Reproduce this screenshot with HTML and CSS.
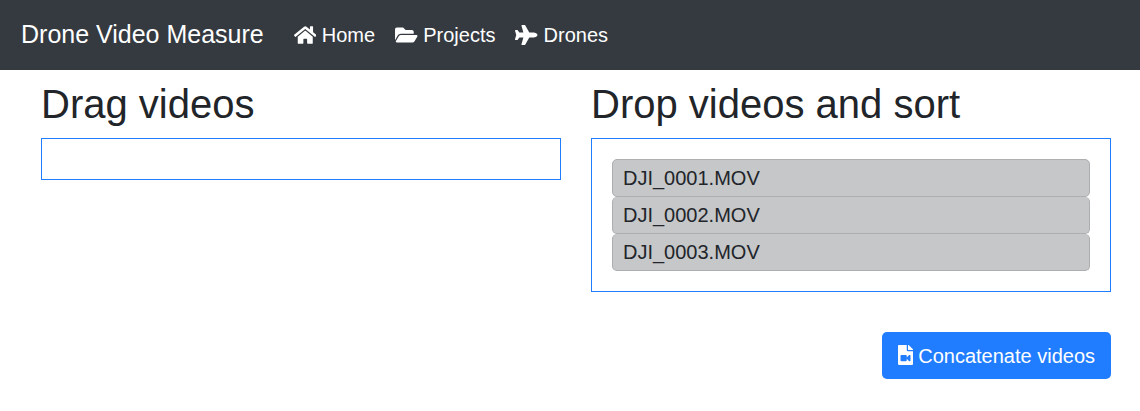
FILE: index.html
```html
<!DOCTYPE html>
<html lang="en">
<head>
<meta charset="utf-8">
<title>Drone Video Measure</title>
<link rel="stylesheet" href="styles.css">
</head>
<body>
<nav class="navbar">
  <a class="brand">Drone Video Measure</a>
  <a class="nav-link"><svg class="icon home" viewBox="0 0 576 512"><path d="M280.37 148.26L96 300.11V464a16 16 0 0 0 16 16l112.06-.29a16 16 0 0 0 15.92-16V368a16 16 0 0 1 16-16h64a16 16 0 0 1 16 16v95.64a16 16 0 0 0 16 16.05L464 480a16 16 0 0 0 16-16V300L295.67 148.26a12.19 12.19 0 0 0-15.3 0zM571.6 251.47L488 182.56V44.05a12 12 0 0 0-12-12h-56a12 12 0 0 0-12 12v72.61L318.47 43a48 48 0 0 0-61 0L4.34 251.47a12 12 0 0 0-1.6 16.9l25.5 31A12 12 0 0 0 45.15 301l235.22-193.74a12.19 12.19 0 0 1 15.3 0L530.9 301a12 12 0 0 0 16.9-1.6l25.5-31a12 12 0 0 0-1.7-16.93z"/></svg> Home</a>
  <a class="nav-link"><svg class="icon folder" viewBox="0 0 576 512"><path d="M572.694 292.093L500.27 416.248A63.997 63.997 0 0 1 444.989 448H45.025c-18.523 0-30.064-20.093-20.731-36.093l72.424-124.155A64 64 0 0 1 152 256h399.964c18.523 0 30.064 20.093 20.73 36.093zM152 224h328v-48c0-26.51-21.49-48-48-48H272l-64-64H48C21.49 64 0 85.49 0 112v278.046l69.077-118.418C86.214 242.25 117.989 224 152 224z"/></svg> Projects</a>
  <a class="nav-link"><svg class="icon plane" viewBox="0 0 576 512"><path d="M480 192H365.71L260.61 8.06A16.014 16.014 0 0 0 246.71 0h-65.5c-10.63 0-18.3 10.17-15.38 20.39L214.86 192H112l-43.2-57.6c-3.02-4.03-7.77-6.4-12.8-6.4H16.01C5.6 128-2.04 137.78.49 147.88L32 256 .49 364.12C-2.04 374.22 5.6 384 16.01 384H56c5.04 0 9.78-2.37 12.8-6.4L112 320h102.86l-49.03 171.6c-2.92 10.22 4.75 20.4 15.38 20.4h65.5c5.74 0 11.04-3.08 13.89-8.06L365.71 320H480c35.35 0 96-28.65 96-64s-60.65-64-96-64z"/></svg> Drones</a>
</nav>
<main class="content">
  <section class="column">
    <h1 class="title">Drag videos</h1>
    <div class="list"></div>
  </section>
  <section class="column">
    <h1 class="title">Drop videos and sort</h1>
    <div class="list">
      <div class="item">DJI_0001.MOV</div>
      <div class="item">DJI_0002.MOV</div>
      <div class="item">DJI_0003.MOV</div>
    </div>
    <button class="button"><svg class="icon file" viewBox="0 0 384 512"><path d="M384 121.941V128H256V0h6.059c6.365 0 12.47 2.529 16.971 7.029l97.941 97.941A24.005 24.005 0 0 1 384 121.941zM224 136V0H24C10.745 0 0 10.745 0 24v464c0 13.255 10.745 24 24 24h336c13.255 0 24-10.745 24-24V160H248c-13.2 0-24-10.8-24-24zm96 144.016v111.963c0 21.445-25.943 31.998-40.971 16.971L224 353.941V392c0 13.255-10.745 24-24 24H88c-13.255 0-24-10.745-24-24V280c0-13.255 10.745-24 24-24h112c13.255 0 24 10.745 24 24v38.059l55.029-55.013c15.011-15.01 40.971-4.491 40.971 16.97z"/></svg> Concatenate videos</button>
  </section>
</main>
</body>
</html>
```

FILE: styles.css
```css
* { box-sizing: border-box; }
body {
  margin: 0;
  background: #fff;
  color: #212529;
  font: 20px/30px "Liberation Sans", Arial, sans-serif;
}
.navbar {
  display: flex;
  align-items: center;
  height: 70px;
  padding: 0 21px;
  background: #343a40;
  color: #fff;
}
.brand {
  margin-right: 30px;
  padding-bottom: 2px;
  font-size: 25px;
}
.nav-link { margin-right: 20px; white-space: nowrap; }
.icon {
  height: 20px;
  vertical-align: -2.5px;
  fill: currentColor;
}
.home, .folder, .plane { width: 22.5px; }
.file { width: 15px; }
.content {
  display: flex;
  gap: 30px;
  padding: 10px 29px 0 41px;
}
.column {
  display: flex;
  flex: 1;
  flex-direction: column;
}
.title {
  margin: 0 0 10px;
  font-size: 40px;
  font-weight: 400;
  line-height: 48px;
}
.list {
  min-height: 42px;
  padding: 20px;
  border: 1px solid #217dff;
}
.item {
  padding: 3px 10px;
  border: 1px solid #adaeb0;
  border-radius: 5px;
  background: #c6c7c9;
}
.item + .item { border-top: 0; }
.button {
  align-self: flex-end;
  height: 47px;
  margin-top: 40px;
  padding: 0 16px;
  border: 0;
  border-radius: 5px;
  background: #217dff;
  color: #fff;
  font: inherit;
}
```
